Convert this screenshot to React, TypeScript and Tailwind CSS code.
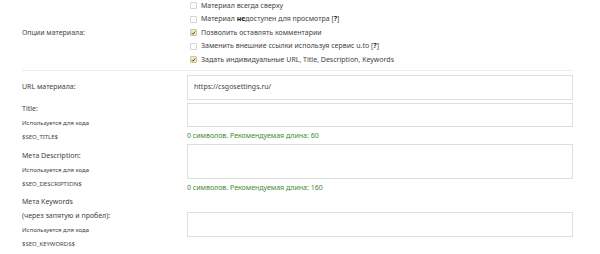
const font = { fontFamily: '"Noto Sans", "DejaVu Sans", sans-serif' };

const Check = ({ on }: { on?: boolean }) => (
    <span
        className={
            "inline-flex items-center justify-center w-[7px] h-[7px] rounded-[1px] border mr-[4px] shrink-0 " +
            (on ? "bg-[#f1e6c6] border-[#cfc3a0]" : "bg-white border-[#d4d4d4]")
        }
    >
        {on && (
            <svg viewBox="0 0 8 8" className="w-[6px] h-[6px]">
                <path d="M1.2 4.2 L3 6 L6.8 1.6" stroke="#3a3020" strokeWidth="1.4" fill="none" />
            </svg>
        )}
    </span>
);

const Row = ({ children }: { children: React.ReactNode }) => (
    <div className="flex items-center h-[13.5px] text-[7px] text-[#3f3f3f]">{children}</div>
);

const Hint = ({ n }: { n: number }) => (
    <div className="mt-[2px] h-[14px] leading-[14px] text-[7px] text-[#3f8a2e]">
        0 символов. Рекомендуемая длина: {n}
    </div>
);

const Small = ({ children }: { children: React.ReactNode }) => (
    <div className="h-[14px] leading-[14px] text-[6px] text-[#444]">{children}</div>
);

const Line = ({ children }: { children: React.ReactNode }) => (
    <div className="h-[14px] leading-[14px] text-[7px] text-[#3f3f3f]">{children}</div>
);

export default function App() {
    return (
        <div className="w-[600px] h-[254px] bg-white overflow-hidden" style={font}>
            <div className="ml-[22px] w-[551px]">
                <div className="flex items-center mt-[-1px]">
                    <div className="w-[165px] text-[7px] text-[#3f3f3f]">Опции материала:</div>
                    <div className="pl-[3px]">
                        <Row><Check />Материал всегда сверху</Row>
                        <Row>
                            <Check />Материал&nbsp;<b className="text-[#222]">не</b>доступен для просмотра [<b className="text-[#222]">?</b>]
                        </Row>
                        <Row><Check on />Позволить оставлять комментарии</Row>
                        <Row>
                            <Check />Заменить внешние ссылки используя сервис u.to [<b className="text-[#222]">?</b>]
                        </Row>
                        <Row><Check on />Задать индивидуальные URL, Title, Description, Keywords</Row>
                    </div>
                </div>

                <div className="mt-[3.5px] border-t border-[#ececec]" />

                <div className="flex items-center py-[2px] mt-[2px]">
                    <div className="w-[165px] text-[7px] text-[#3f3f3f]">URL материала:</div>
                    <div className="flex-1 h-[25px] border border-[#dedede] flex items-center px-[6px] text-[7px] text-[#3f3f3f]">
                        https://csgosettings.ru/
                    </div>
                </div>

                <div className="flex items-center">
                    <div className="w-[165px]">
                        <Line>Title:</Line>
                        <Small>Используется для кода</Small>
                        <Small>$SEO_TITLE$</Small>
                    </div>
                    <div className="flex-1">
                        <div className="h-[24px] border border-[#dedede]" />
                        <Hint n={60} />
                    </div>
                </div>

                <div className="flex items-center">
                    <div className="w-[165px]">
                        <Line>Мета Description:</Line>
                        <Small>Используется для кода</Small>
                        <Small>$SEO_DESCRIPTION$</Small>
                    </div>
                    <div className="flex-1">
                        <div className="h-[35px] border border-[#dedede]" />
                        <Hint n={160} />
                    </div>
                </div>

                <div className="flex items-center">
                    <div className="w-[165px]">
                        <Line>Мета Keywords</Line>
                        <Line>(через запятую и пробел):</Line>
                        <Small>Используется для кода</Small>
                        <Small>$SEO_KEYWORDS$</Small>
                    </div>
                    <div className="flex-1 pt-[2px]">
                        <div className="h-[25px] border border-[#dedede]" />
                    </div>
                </div>
            </div>
        </div>
    );
}
